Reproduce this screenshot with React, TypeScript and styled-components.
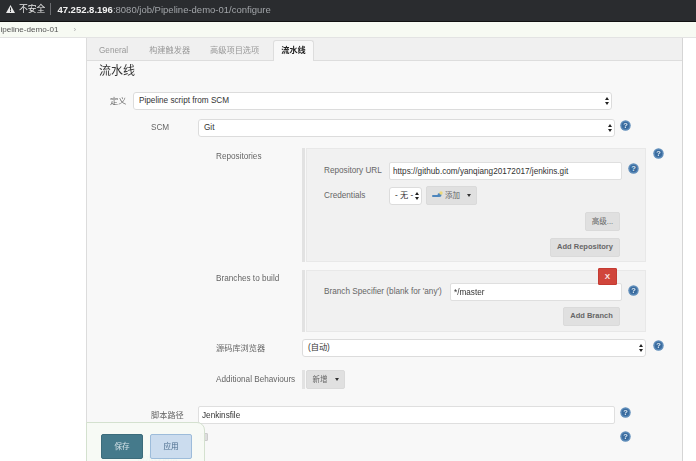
import React from "react";
import styled, { createGlobalStyle } from "styled-components";

const GlobalStyle = createGlobalStyle`
  html, body {
    margin: 0;
    height: 461px;
    overflow: hidden;
    background: #fff;
    font-family: "Liberation Sans", "Noto Sans CJK SC", sans-serif;
  }

  #root {
    filter: blur(0.55px);
  }
`;

const Page = styled.div`
  position: relative;
  width: 696px;
  height: 461px;
  overflow: hidden;
`;

const AddressBar = styled.header`
  display: flex;
  align-items: center;
  box-sizing: border-box;
  height: 22px;
  padding: 0 0 3px 6px;
  background: #2a2c2f;
  border-bottom: 1px solid #111;
  font-size: 8.8px;
  color: #e6e6e6;
`;

const Insecure = styled.span`
  margin-left: 4px;
  padding-right: 5px;
  border-right: 1px solid #6a6c70;
  line-height: 12px;
`;

const Url = styled.span`
  margin-left: 6px;
  color: #a2a5a9;
  font-size: 9.5px;

  b {
    color: #f2f2f2;
    font-weight: 700;
  }
`;

const Crumbs = styled.nav`
  display: flex;
  align-items: center;
  box-sizing: border-box;
  height: 16px;
  padding-bottom: 1px;
  background: #f7faf3;
  border-bottom: 1px solid #e3e3e3;
  font-size: 8.1px;
  color: #555;
  overflow: hidden;
`;

const CrumbLink = styled.span`
  margin-left: -5px;
`;

const CrumbArrow = styled.span`
  margin-left: 15px;
  color: #aaa;
`;

const Panel = styled.main`
  box-sizing: border-box;
  width: 597px;
  height: 424px;
  margin-left: 86px;
  border-left: 1px solid #dcdcdc;
  border-right: 1px solid #d5d5d5;
  background: #f8f8f8;
`;

const TabStrip = styled.div`
  display: flex;
  align-items: flex-end;
  height: 23px;
  padding-left: 12px;
  background: #f0f0f0;
  border-bottom: 1px solid #ddd;
  box-sizing: border-box;
`;

const Tab = styled.div<{ $active?: boolean; $gap: number }>`
  box-sizing: border-box;
  height: ${(p) => (p.$active ? "21px" : "19px")};
  margin-left: ${(p) => p.$gap}px;
  margin-bottom: ${(p) => (p.$active ? "-1px" : "0")};
  padding: ${(p) => (p.$active ? "0 7px" : "0")};
  line-height: 19px;
  font-size: 8.2px;
  font-weight: ${(p) => (p.$active ? 700 : 400)};
  color: ${(p) => (p.$active ? "#222" : "#999")};
  background: ${(p) => (p.$active ? "#f8f8f8" : "transparent")};
  border: ${(p) => (p.$active ? "1px solid #ddd" : "none")};
  border-bottom: none;
  border-radius: 3px 3px 0 0;
`;

const Heading = styled.h2`
  margin: 2px 0 13px 12px;
  height: 16px;
  font-size: 12px;
  line-height: 16px;
  font-weight: 400;
  color: #333;
`;

const Row = styled.div<{ $top?: number; $left: number }>`
  position: relative;
  display: flex;
  align-items: center;
  margin-top: ${(p) => p.$top ?? 0}px;
  padding-left: ${(p) => p.$left}px;
`;

const BlockRow = styled(Row)`
  align-items: flex-start;
`;

const Label = styled.label<{ $width: number; $cjk?: boolean }>`
  flex: none;
  width: ${(p) => p.$width}px;
  padding-bottom: ${(p) => (p.$cjk ? 3 : 1)}px;
  font-size: 8.2px;
  color: #666;
  white-space: nowrap;
`;

const BlockLabel = styled(Label)`
  margin-top: 4px;
`;

const SelectBox = styled.div<{ $width: number }>`
  position: relative;
  flex: none;
  box-sizing: border-box;
  width: ${(p) => p.$width}px;
  height: 18px;
  padding-left: 5px;
  line-height: 16px;
  font-size: 8.2px;
  color: #333;
  background: #fff;
  border: 1px solid #dcdcdc;
  border-radius: 3px;
  white-space: nowrap;

  &::before,
  &::after {
    content: "";
    position: absolute;
    right: 2px;
    border-left: 2px solid transparent;
    border-right: 2px solid transparent;
  }

  &::before {
    top: 4px;
    border-bottom: 3px solid #222;
  }

  &::after {
    top: 9px;
    border-top: 3px solid #222;
  }
`;

const TextInput = styled.input<{ $width: number }>`
  flex: none;
  box-sizing: border-box;
  width: ${(p) => p.$width}px;
  height: 18px;
  padding: 0 0 0 3px;
  font-family: inherit;
  font-size: 8.2px;
  color: #333;
  background: #fff;
  border: 1px solid #dfdfdf;
  border-radius: 2px;
`;

const Help = styled.svg<{ $left: number; $top: number }>`
  flex: none;
  width: 11px;
  height: 11px;
  margin-left: ${(p) => p.$left}px;
  margin-top: ${(p) => p.$top}px;
`;

const HelpIcon = ({ left, top = -5 }: { left: number; top?: number }) => (
  <Help $left={left} $top={top} viewBox="0 0 22 22">
    <circle cx="11" cy="11" r="10.5" fill="#5f8dba" />
    <circle cx="11" cy="11" r="7.5" fill="#3a6c9f" />
    <text x="11" y="16" textAnchor="middle" fontSize="15" fontWeight="700" fill="#dfe9f2" fontFamily="Liberation Sans">
      ?
    </text>
  </Help>
);

const Block = styled.section<{ $height: number }>`
  position: relative;
  flex: none;
  box-sizing: border-box;
  width: 344px;
  height: ${(p) => p.$height}px;
  border-left: 3px solid #e2e2e2;
  padding-left: 1px;
`;

const BlockBody = styled.div`
  box-sizing: border-box;
  height: 100%;
  background: #f1f1f1;
  border: 1px solid #e8e8e8;
`;

const InnerRow = styled.div<{ $top: number }>`
  display: flex;
  align-items: center;
  margin-top: ${(p) => p.$top}px;
  padding-left: 17px;
`;

const ButtonRow = styled.div<{ $top: number }>`
  display: flex;
  justify-content: flex-end;
  margin-top: ${(p) => p.$top}px;
  padding-right: 25px;
`;

const GreyButton = styled.button<{ $width: number; $left?: number; $bold?: boolean }>`
  flex: none;
  display: flex;
  align-items: center;
  justify-content: center;
  box-sizing: border-box;
  width: ${(p) => p.$width}px;
  height: 19px;
  margin-left: ${(p) => p.$left ?? 0}px;
  padding: 0 0 2px;
  font-family: inherit;
  font-size: 7.5px;
  font-weight: ${(p) => (p.$bold ? 700 : 400)};
  color: #666;
  background: #e0e0e0;
  border: 1px solid #dadada;
  border-radius: 2px;
`;

const Caret = styled.i`
  margin: 2px 0 0 7px;
  border-left: 2.5px solid transparent;
  border-right: 2.5px solid transparent;
  border-top: 3px solid #333;
`;

const KeyIcon = styled.svg`
  width: 11px;
  height: 8px;
  margin-right: 2px;
`;

const RemoveButton = styled.button`
  position: absolute;
  top: -2px;
  left: 293px;
  width: 19px;
  height: 17px;
  padding: 0 0 1px;
  font-family: inherit;
  font-size: 8px;
  font-weight: 700;
  color: #f9e6e4;
  background: #d0453b;
  border: 1px solid #c43b32;
  border-radius: 1px;
`;

const AddBar = styled.div`
  display: flex;
  align-items: center;
  height: 19px;
  padding-left: 1px;
  border-left: 3px solid #e2e2e2;
`;

const Checkbox = styled.span`
  display: block;
  flex: none;
  width: 6px;
  height: 6px;
  margin-left: 113px;
  background: #ddd;
  border: 1px solid #ccc;
  border-radius: 1px;
`;

const SyntaxLink = styled.a`
  display: block;
  margin: 9px 0 0 50px;
  font-size: 8.2px;
  color: #5c7fa3;
`;

const SaveBar = styled.footer`
  position: absolute;
  left: 86px;
  top: 422px;
  box-sizing: border-box;
  display: flex;
  gap: 7px;
  width: 119px;
  height: 50px;
  padding: 11px 0 0 14px;
  background: rgba(247, 250, 244, 0.95);
  border: 1px solid #d4e1cf;
  border-radius: 0 8px 0 0;
`;

const SaveButton = styled.button<{ $primary?: boolean }>`
  box-sizing: border-box;
  width: 42px;
  height: 25px;
  padding: 0 0 3px;
  font-family: inherit;
  font-size: 7.6px;
  color: ${(p) => (p.$primary ? "#d5e3e8" : "#4a6c8c")};
  background: ${(p) => (p.$primary ? "#457a8b" : "#cbdcee")};
  border: 1px solid ${(p) => (p.$primary ? "#3c6c7b" : "#9dbcda")};
  border-radius: 2px;
`;

export default function App() {
  return (
    <Page>
      <GlobalStyle />
      <AddressBar>
        <svg width="9" height="8" viewBox="0 0 18 16">
          <path d="M9 0 L18 16 H0 Z" fill="#e8e8e8" />
          <rect x="8" y="5" width="2" height="6" fill="#2a2c2f" />
          <rect x="8" y="12" width="2" height="2" fill="#2a2c2f" />
        </svg>
        <Insecure>不安全</Insecure>
        <Url>
          <b>47.252.8.196</b>:8080/job/Pipeline-demo-01/configure
        </Url>
      </AddressBar>
      <Crumbs>
        <CrumbLink>Pipeline-demo-01</CrumbLink>
        <CrumbArrow>›</CrumbArrow>
      </Crumbs>
      <Panel>
        <TabStrip>
          <Tab $gap={0}>General</Tab>
          <Tab $gap={21}>构建触发器</Tab>
          <Tab $gap={20}>高级项目选项</Tab>
          <Tab $active $gap={14}>流水线</Tab>
        </TabStrip>
        <Heading>流水线</Heading>

        <Row $left={23}>
          <Label $width={23} $cjk>定义</Label>
          <SelectBox $width={479}>Pipeline script from SCM</SelectBox>
        </Row>

        <Row $top={9} $left={64}>
          <Label $width={47}>SCM</Label>
          <SelectBox $width={417}>Git</SelectBox>
          <HelpIcon left={5} />
        </Row>

        <BlockRow $top={11} $left={129}>
          <BlockLabel $width={86}>Repositories</BlockLabel>
          <Block $height={114}>
            <BlockBody>
              <InnerRow $top={13}>
                <Label $width={65}>Repository URL</Label>
                <TextInput $width={233} defaultValue="https://github.com/yanqiang20172017/jenkins.git" />
                <HelpIcon left={6} />
              </InnerRow>
              <InnerRow $top={6}>
                <Label $width={65}>Credentials</Label>
                <SelectBox $width={33}>- 无 -</SelectBox>
                <GreyButton $width={51} $left={4}>
                  <KeyIcon viewBox="0 0 22 16">
                    <rect x="0" y="8" width="15" height="4" rx="2" fill="#4d86bd" />
                    <circle cx="15" cy="8" r="4" fill="#4d86bd" />
                    <circle cx="18" cy="4" r="3.5" fill="#ecd97a" />
                  </KeyIcon>
                  添加
                  <Caret />
                </GreyButton>
              </InnerRow>
              <ButtonRow $top={7}>
                <GreyButton $width={35}>高级...</GreyButton>
              </ButtonRow>
              <ButtonRow $top={7}>
                <GreyButton $width={70} $bold>Add Repository</GreyButton>
              </ButtonRow>
            </BlockBody>
          </Block>
          <HelpIcon left={7} top={0} />
        </BlockRow>

        <BlockRow $top={8} $left={129}>
          <BlockLabel $width={86}>Branches to build</BlockLabel>
          <Block $height={62}>
            <RemoveButton>X</RemoveButton>
            <BlockBody>
              <InnerRow $top={12}>
                <Label $width={126}>Branch Specifier (blank for 'any')</Label>
                <TextInput $width={172} defaultValue="*/master" />
                <HelpIcon left={6} top={-3} />
              </InnerRow>
              <ButtonRow $top={6}>
                <GreyButton $width={57} $bold>Add Branch</GreyButton>
              </ButtonRow>
            </BlockBody>
          </Block>
        </BlockRow>

        <Row $top={7} $left={129}>
          <Label $width={86} $cjk>源码库浏览器</Label>
          <SelectBox $width={344}>(自动)</SelectBox>
          <HelpIcon left={7} />
        </Row>

        <Row $top={13} $left={129}>
          <Label $width={86}>Additional Behaviours</Label>
          <AddBar>
            <GreyButton $width={39}>
              新增
              <Caret />
            </GreyButton>
          </AddBar>
        </Row>

        <Row $top={17} $left={64}>
          <Label $width={47} $cjk>脚本路径</Label>
          <TextInput $width={417} defaultValue="Jenkinsfile" />
          <HelpIcon left={5} />
        </Row>

        <Row $top={7} $left={0}>
          <Checkbox />
          <HelpIcon left={412} top={0} />
        </Row>
        <SyntaxLink>流水线语法</SyntaxLink>
      </Panel>
      <SaveBar>
        <SaveButton $primary>保存</SaveButton>
        <SaveButton>应用</SaveButton>
      </SaveBar>
    </Page>
  );
}
